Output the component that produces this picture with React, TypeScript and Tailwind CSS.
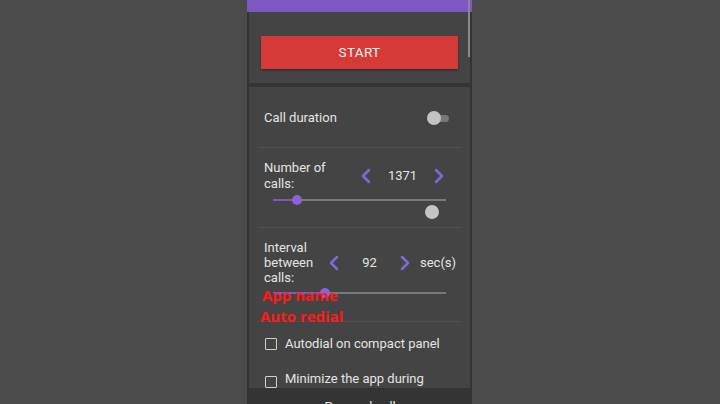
import { ChevronLeft, ChevronRight } from "lucide-react";

function Stepper({ value, width }: { value: string; width: string }) {
  return (
    <div className="flex items-center shrink-0">
      <ChevronLeft className="w-[24px] h-[24px] text-[#7e6bd6] shrink-0" strokeWidth={2.5} />
      <span className={`text-[13px] text-[#e6e6e6] text-center ${width}`}>{value}</span>
      <ChevronRight className="w-[24px] h-[24px] text-[#7e6bd6] shrink-0" strokeWidth={2.5} />
    </div>
  );
}

function Slider({ pct }: { pct: number }) {
  return (
    <div className="relative h-[10px] mx-[15px]">
      <div className="absolute left-0 right-0 top-[4px] h-[2px] bg-[#7a7a7a]" />
      <div className="absolute left-0 top-[4px] h-[2px] bg-[#7e57c2]" style={{ width: `${pct}%` }} />
      <div
        className="absolute top-0 w-[10px] h-[10px] rounded-full bg-[#8a63d8] -ml-[5px]"
        style={{ left: `${pct}%` }}
      />
    </div>
  );
}

export default function App() {
  return (
    <div className="w-[720px] h-[404px] bg-[#4b4b4b] flex" style={{ fontFamily: "Roboto, 'Noto Sans', sans-serif" }}>
      <div className="ml-[247px] w-[225px] h-[404px] bg-[#343434] relative overflow-hidden flex flex-col">
        <div className="h-[12px] bg-[#7e57c2] shrink-0" />
        <div className="mx-[2px] h-[71px] bg-[#444444] shrink-0 px-[12px] pt-[24px]">
          <div className="h-[33px] bg-[#d63a36] flex items-center justify-center text-[#f4f4f4] text-[13.5px] font-normal tracking-wide shadow-[0_1px_2px_rgba(0,0,0,0.4)]">
            START
          </div>
        </div>
        <div className="mx-[2px] mt-[4px] flex-1 bg-[#444444] px-[9px] text-[#e4e4e4] text-[13px]">
          <div className="h-[61px] flex items-center justify-between border-b border-[#4f4f4f] px-[6px]">
            <span className="mt-[1px]">Call duration</span>
            <div className="relative w-[22px] h-[14px] mr-[6px] mt-[1px]">
              <div className="absolute left-[2px] right-0 top-[4px] h-[7px] rounded-full bg-[#777]" />
              <div className="absolute left-0 top-0 w-[14px] h-[14px] rounded-full bg-[#c4c4c4]" />
            </div>
          </div>
          <div className="h-[80px] border-b border-[#4f4f4f] pt-[12px]">
            <div className="flex items-center px-[6px]">
              <span className="w-[90px] shrink-0 leading-[16px]">Number of<br />calls:</span>
              <Stepper value="1371" width="w-[49px]" />
            </div>
            <div className="mt-[3px]">
              <Slider pct={14} />
            </div>
            <div className="flex justify-end pr-[22px] mt-0">
              <div className="w-[14px] h-[14px] rounded-full bg-[#c4c4c4]" />
            </div>
          </div>
          <div className="h-[94px] border-b border-[#4f4f4f] pt-[12px] relative">
            <div className="flex items-center px-[6px]">
              <span className="w-[58px] shrink-0 leading-[15px]">Interval<br />between<br />calls:</span>
              <Stepper value="92" width="w-[47px]" />
              <span className="ml-[3px]">sec(s)</span>
            </div>
            <div className="mt-[3px]">
              <Slider pct={30} />
            </div>
            <div className="absolute left-[2px] top-[57px] text-[#ff1a1a] font-bold text-[15px] leading-[21px]" style={{ fontFamily: "'Open Sans', sans-serif" }}>
              <div className="ml-[2px]">App name</div>
              <div>Auto redial</div>
            </div>
          </div>
          <div className="flex items-center gap-[8px] px-[7px] h-[42px] mt-[1px]">
            <div className="w-[12px] h-[12px] border-[1.5px] border-[#d0d0d0] rounded-[1px]" />
            <span>Autodial on compact panel</span>
          </div>
          <div className="flex items-start gap-[8px] px-[7px] pt-[4px]">
            <div className="w-[12px] h-[12px] border-[1.5px] border-[#d0d0d0] rounded-[1px] mt-[7px]" />
            <span>Minimize the app during</span>
          </div>
        </div>
        <div className="absolute left-0 right-0 bottom-0 h-[16px] bg-[#343434] flex justify-center">
          <span className="text-[13px] text-[#e4e4e4] mt-[9px] ml-[8px]">Proceed calls</span>
        </div>
        <div className="absolute right-[2px] top-0 w-[2px] h-[57px] bg-[#8a8a8a]" />
      </div>
    </div>
  );
}
